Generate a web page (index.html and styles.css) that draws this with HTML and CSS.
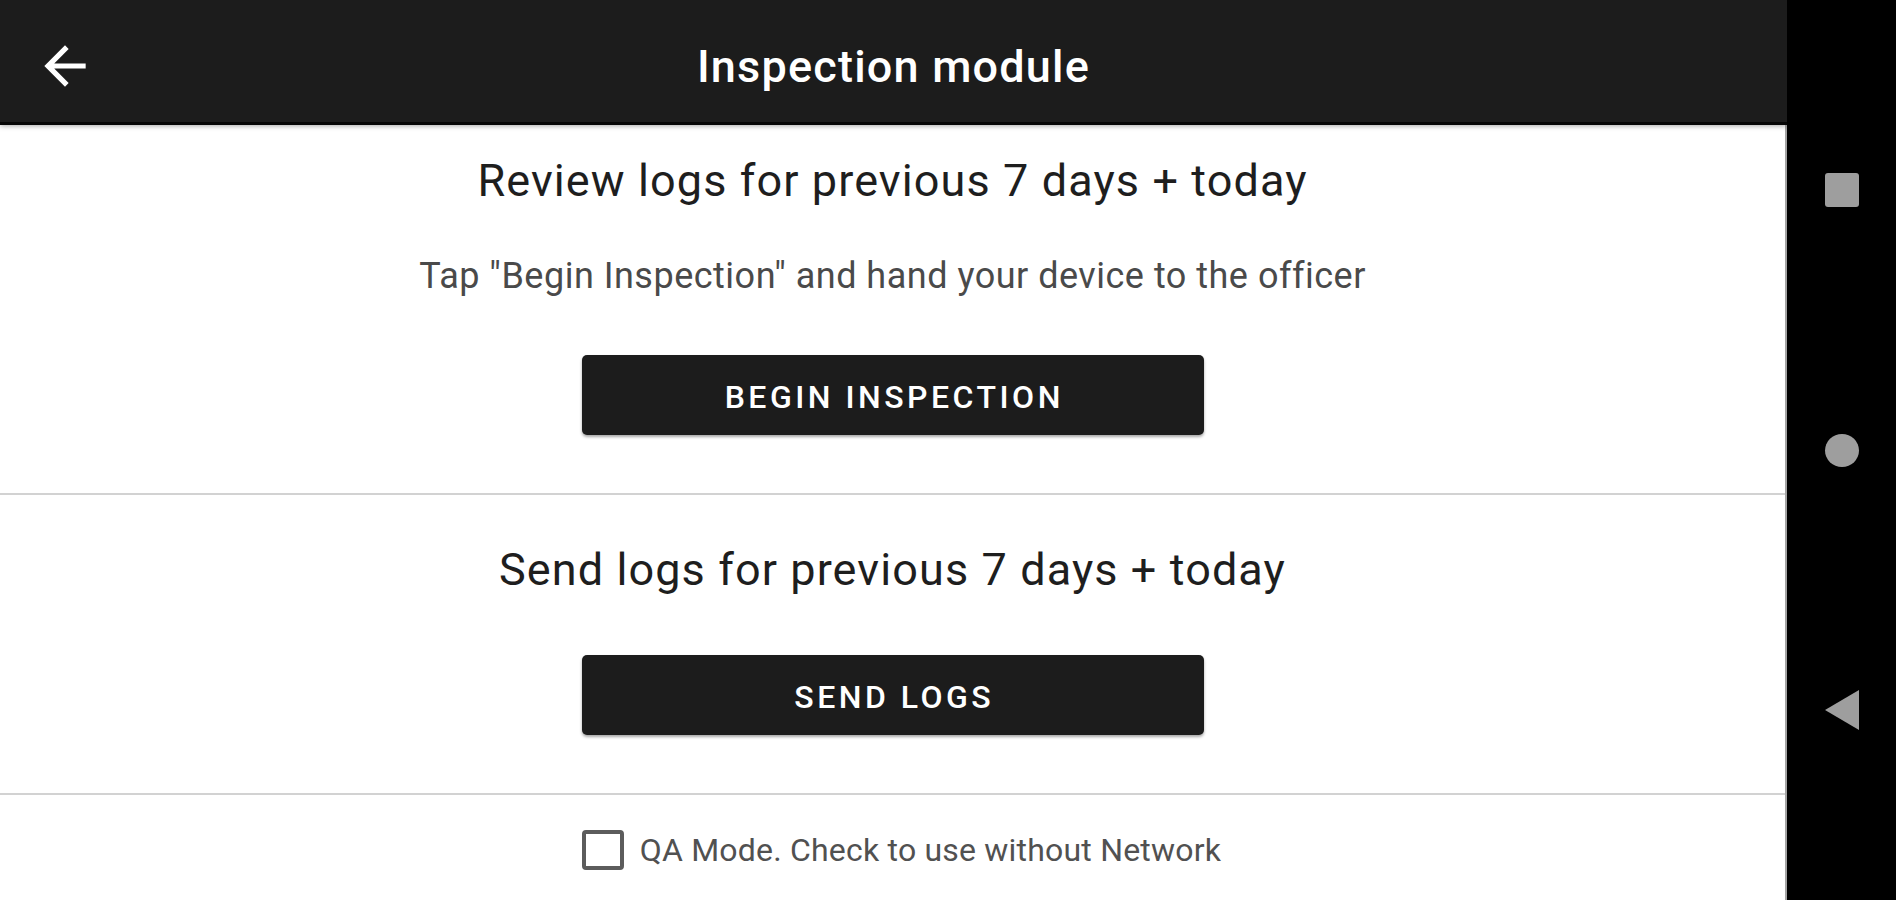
FILE: index.html
```html
<!DOCTYPE html>
<html lang="en">
<head>
<meta charset="utf-8">
<title>Inspection module</title>
<link rel="stylesheet" href="styles.css">
</head>
<body>
<div class="screen">
  <div class="app">
    <header class="toolbar">
      <button class="back" aria-label="Back">
        <svg viewBox="0 0 24 24" width="62" height="62"><path fill="#ffffff" d="M20 11H7.83l5.59-5.59L12 4l-8 8 8 8 1.41-1.41L7.83 13H20v-2z"/></svg>
      </button>
      <h1 class="title">Inspection module</h1>
      <span class="toolbar-spacer"></span>
    </header>
    <main class="content">
      <section class="panel panel-review">
        <h2 class="panel-title">Review logs for previous 7 days + today</h2>
        <p class="panel-hint">Tap &quot;Begin Inspection&quot; and hand your device to the officer</p>
        <button class="action action-review">BEGIN INSPECTION</button>
      </section>
      <section class="panel panel-send">
        <h2 class="panel-title">Send logs for previous 7 days + today</h2>
        <button class="action action-send">SEND LOGS</button>
      </section>
      <label class="qa">
        <span class="qa-box"></span>
        <span class="qa-text">QA Mode. Check to use without Network</span>
      </label>
    </main>
  </div>
  <nav class="sysnav">
    <div class="sysnav-slot"><span class="nav-square"></span></div>
    <div class="sysnav-slot"><span class="nav-circle"></span></div>
    <div class="sysnav-slot">
      <svg class="nav-back" viewBox="0 0 34 40" width="34" height="40"><polygon points="0,20 34,0 34,40" fill="#9e9e9e"/></svg>
    </div>
  </nav>
</div>
</body>
</html>
```

FILE: styles.css
```css
* { box-sizing: border-box; }
html, body {
  margin: 0;
  padding: 0;
  width: 1896px;
  height: 900px;
  overflow: hidden;
  background: #ffffff;
  font-family: Roboto, "Noto Sans", "Liberation Sans", sans-serif;
}
.screen {
  display: flex;
  width: 1896px;
  height: 900px;
}
.app {
  width: 1787px;
  height: 900px;
  display: flex;
  flex-direction: column;
  background: #ffffff;
}
.toolbar {
  height: 125px;
  flex: 0 0 125px;
  background: #1c1c1c;
  border-bottom: 3px solid #060606;
  box-shadow: 0 1px 5px rgba(0,0,0,0.35);
  display: grid;
  grid-template-columns: 1fr auto 1fr;
  align-items: center;
  padding-top: 12px;
  position: relative;
  z-index: 2;
}
.back {
  justify-self: start;
  margin-left: 34px;
  margin-top: -2px;
  width: 62px;
  height: 62px;
  padding: 0;
  border: none;
  background: transparent;
  display: block;
}
.back svg { display: block; }
.title {
  margin: 0;
  color: #ffffff;
  font-size: 45px;
  font-weight: 500;
  letter-spacing: 1.2px;
  line-height: 54px;
}
.content {
  flex: 1;
  display: flex;
  flex-direction: column;
  border-right: 2px solid #a3a3a3;
}
.panel {
  display: flex;
  flex-direction: column;
  align-items: center;
  border-bottom: 2px solid #d2d2d2;
  padding-bottom: 58px;
}
.panel-review { padding-top: 29px; }
.panel-send { padding-top: 48px; }
.panel-title {
  margin: 0;
  font-size: 45px;
  font-weight: 400;
  line-height: 54px;
  letter-spacing: 1.1px;
  color: #1e1e1e;
}
.panel-hint {
  margin: 46px 0 0;
  font-size: 36px;
  line-height: 44px;
  letter-spacing: 0.5px;
  color: #4a4a4a;
}
.action {
  width: 622px;
  height: 80px;
  border: none;
  border-radius: 5px;
  background: #1c1c1c;
  color: #ffffff;
  font-family: Roboto, "Noto Sans", "Liberation Sans", sans-serif;
  font-size: 32px;
  font-weight: 500;
  letter-spacing: 3.5px;
  padding: 4px 0 0 3.5px;
  box-shadow: 0 2px 3px rgba(0,0,0,0.35);
}
.action-review { margin-top: 57px; }
.action-send { margin-top: 58px; }
.qa {
  display: flex;
  align-items: center;
  justify-content: center;
  gap: 16px;
  padding-top: 35px;
  padding-left: 18px;
}
.qa-box {
  flex: 0 0 42px;
  width: 42px;
  height: 40px;
  border: 4.5px solid #5c5c5c;
  border-radius: 4px;
  background: #ffffff;
}
.qa-text {
  font-size: 32px;
  line-height: 40px;
  letter-spacing: 0.2px;
  color: #515151;
}
.sysnav {
  width: 109px;
  height: 900px;
  background: #000000;
  display: flex;
  flex-direction: column;
  justify-content: center;
  align-items: center;
}
.sysnav-slot {
  height: 260px;
  width: 109px;
  display: flex;
  align-items: center;
  justify-content: center;
}
.nav-square {
  width: 34px;
  height: 34px;
  border-radius: 3px;
  background: #9e9e9e;
}
.nav-circle {
  width: 34px;
  height: 33px;
  border-radius: 50%;
  background: #9e9e9e;
}
.nav-back { display: block; }
```
